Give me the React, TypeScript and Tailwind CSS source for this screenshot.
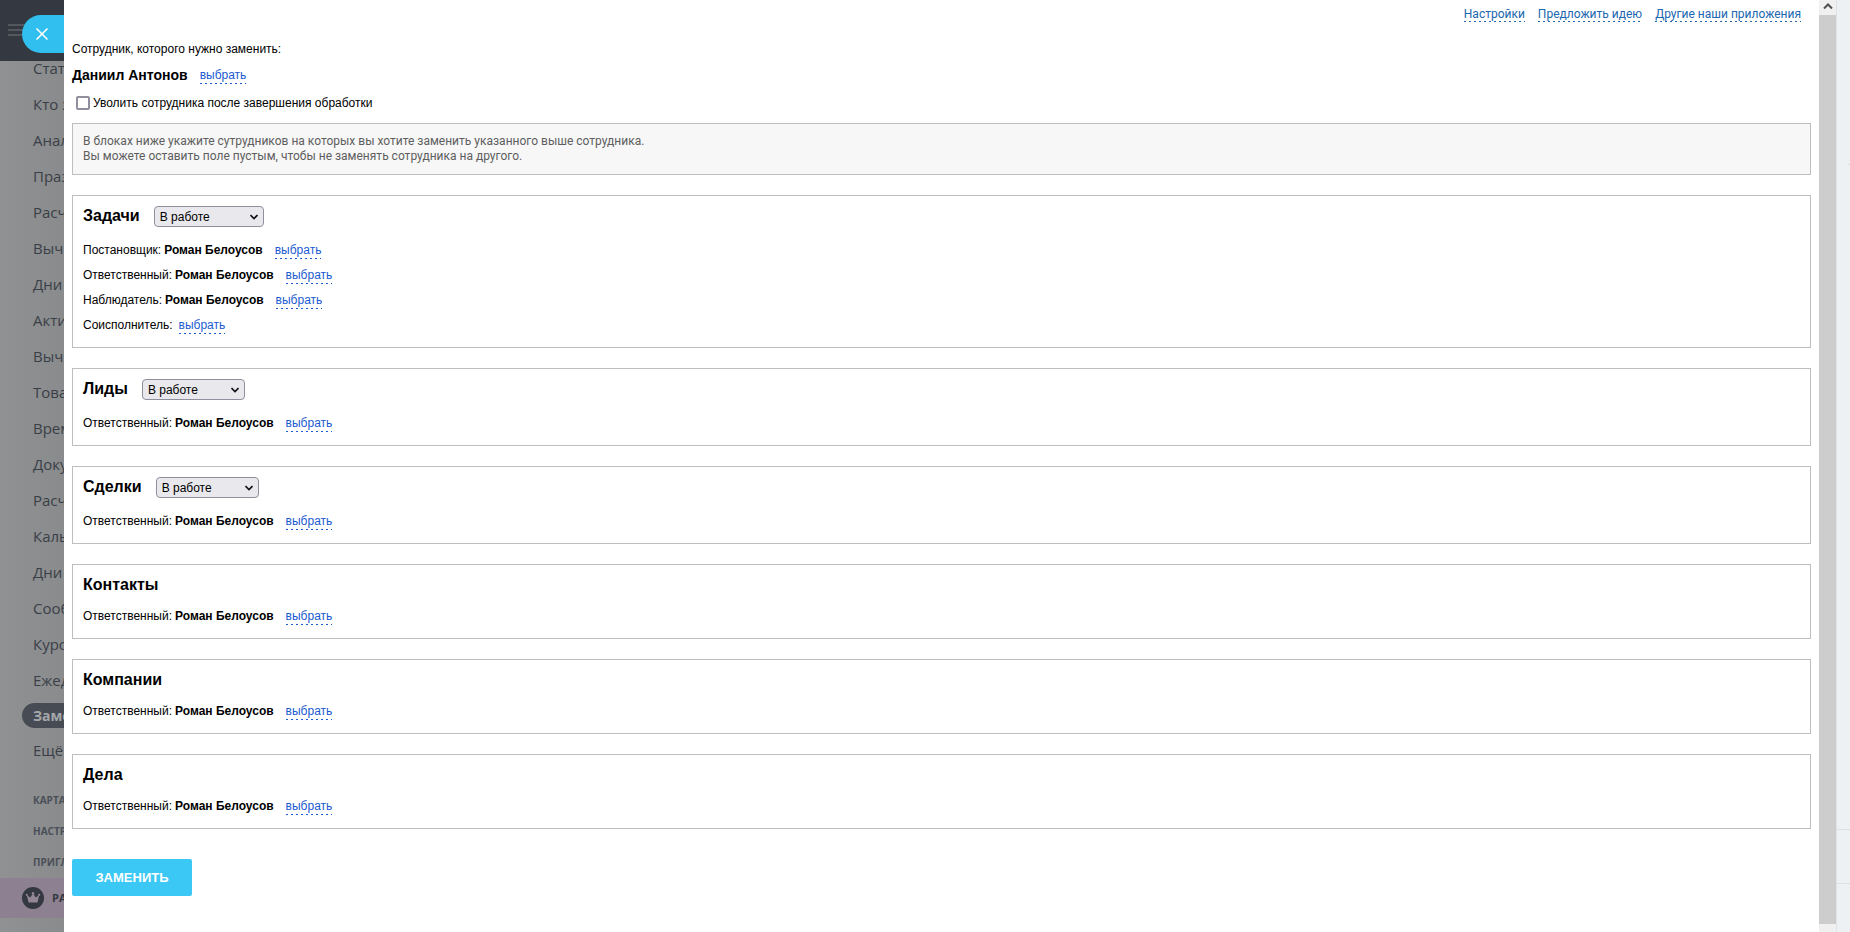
import { useState } from "react";
import { X } from "lucide-react";

interface Person {
  role: string;
  name?: string;
}

interface Block {
  title: string;
  selectWidth?: string;
  people: Person[];
}

const EMPLOYEE = "Роман Белоусов";

const blocks: Block[] = [
  {
    title: "Задачи",
    selectWidth: "w-[110px]",
    people: [
      { role: "Постановщик", name: EMPLOYEE },
      { role: "Ответственный", name: EMPLOYEE },
      { role: "Наблюдатель", name: EMPLOYEE },
      { role: "Соисполнитель" },
    ],
  },
  { title: "Лиды", selectWidth: "w-[103px]", people: [{ role: "Ответственный", name: EMPLOYEE }] },
  { title: "Сделки", selectWidth: "w-[103px]", people: [{ role: "Ответственный", name: EMPLOYEE }] },
  { title: "Контакты", people: [{ role: "Ответственный", name: EMPLOYEE }] },
  { title: "Компании", people: [{ role: "Ответственный", name: EMPLOYEE }] },
  { title: "Дела", people: [{ role: "Ответственный", name: EMPLOYEE }] },
];

const menu = [
  "Стат", "Кто з", "Анал", "Праз", "Расч", "Выч", "Дни", "Акти", "Выч", "Това",
  "Врем", "Доку", "Расч", "Каль", "Дни", "Сооб", "Курс", "Ежед",
];

const footerMenu = ["КАРТА", "НАСТР", "ПРИГЛ"];

const topLinks = ["Настройки", "Предложить идею", "Другие наши приложения"];

function Sidebar() {
  return (
    <aside className="relative flex w-16 shrink-0 flex-col overflow-hidden whitespace-nowrap bg-linear-to-r from-[#8f9193] to-[#898b8d] font-['Open_Sans','Noto_Sans',sans-serif] text-[#3a3f47]">
      <div className="flex h-[61px] shrink-0 items-center bg-[#343841] pb-px pl-2">
        <button type="button" aria-label="Меню" className="flex flex-col gap-[3px]">
          <span className="h-0.5 w-5 bg-[#54575e]" />
          <span className="h-0.5 w-5 bg-[#54575e]" />
          <span className="h-0.5 w-5 bg-[#54575e]" />
        </button>
      </div>
      <button
        type="button"
        aria-label="Закрыть"
        className="absolute top-[15px] left-[22px] flex h-[38px] w-[60px] items-center rounded-l-full bg-[#31bfef] pl-2.5 text-white"
      >
        <X size={20} strokeWidth={2} />
      </button>
      <nav className="-mt-[11px] flex flex-col pl-[33px] text-[15px]">
        {menu.map((item, i) => (
          <a key={i} href="#" className="h-9 leading-9">
            {item}
          </a>
        ))}
        <a
          href="#"
          className="mt-[5px] -ml-[11px] h-[25px] rounded-l-full bg-[#464b54] pl-[11px] text-sm font-bold leading-[25px] text-[#a5a7aa]"
        >
          Замен
        </a>
        <a href="#" className="mt-1 h-9 leading-9">
          Ещё
        </a>
      </nav>
      <nav className="mt-[17px] flex flex-col pl-[33px] text-[10px] font-bold text-[#4a4f57]">
        {footerMenu.map((item) => (
          <a key={item} href="#" className="h-[31px] leading-[31px]">
            {item}
          </a>
        ))}
      </nav>
      <a
        href="#"
        className="flex h-10 shrink-0 items-center gap-2 bg-[#8d8090] pl-[22px] text-[11px] font-bold text-[#343841]"
      >
        <svg viewBox="0 0 22 22" className="size-[22px] shrink-0" aria-hidden="true">
          <circle cx="11" cy="11" r="11" fill="#343841" />
          <g fill="#938696">
            <path d="M4.800 8l3.400 2.600L11 6.500l2.800 4.100L17.200 8l-1.700 7.500h-9z" />
            <circle cx="4.800" cy="7.800" r="1.100" />
            <circle cx="11" cy="6.300" r="1.200" />
            <circle cx="17.200" cy="7.800" r="1.100" />
          </g>
        </svg>
        РА
      </a>
    </aside>
  );
}

function ChooseButton({ label, className = "" }: { label: string; className?: string }) {
  return (
    <button
      type="button"
      aria-label={`выбрать: ${label}`}
      className={`cursor-pointer bg-[linear-gradient(90deg,#1b5ad1_2px,transparent_2px)] bg-[length:5px_1px] bg-bottom-left bg-repeat-x leading-[18px] text-[#1b5ad1] ${className}`}
    >
      выбрать
    </button>
  );
}

function ReplaceBlock({ block }: { block: Block }) {
  const [status, setStatus] = useState("work");

  return (
    <section className="mb-5 border border-[#bebebe] p-2.5">
      <div className={`flex items-start gap-3.5 ${block.selectWidth ? "pb-2.5" : "pb-2"}`}>
        <h2 className="text-base leading-5 font-bold">{block.title}</h2>
        {block.selectWidth && (
          <span className={`relative ${block.selectWidth}`}>
            <select
              aria-label={`Статус: ${block.title}`}
              value={status}
              onChange={(e) => setStatus(e.target.value)}
              className="block h-[21px] w-full appearance-none rounded border border-[#8f8f9d] bg-[#e9e9ed] pl-[5px] text-xs"
            >
              <option value="work">В работе</option>
              <option value="all">Все</option>
            </select>
            <svg
              viewBox="0 0 8 6"
              className="pointer-events-none absolute top-2 right-1.5 h-1.5 w-2"
              fill="none"
              stroke="#111"
              strokeWidth="1.6"
              aria-hidden="true"
            >
              <path d="M.5 1L4 4.500 7.500 1" />
            </svg>
          </span>
        )}
      </div>
      <ul>
        {block.people.map((person) => (
          <li key={person.role} className="flex h-[25px] items-center">
            <span>{person.role}:</span>
            {person.name && <b className="ml-[3px]">{person.name}</b>}
            <ChooseButton label={person.role} className={person.name ? "ml-3" : "ml-1.5"} />
          </li>
        ))}
      </ul>
    </section>
  );
}

export default function App() {
  const [dismiss, setDismiss] = useState(false);

  return (
    <div className="flex h-screen overflow-hidden bg-white font-['Liberation_Sans',Arial,sans-serif] text-xs text-black">
      <Sidebar />
      <main className="min-w-0 flex-1 overflow-hidden px-2">
        <header className="flex justify-end gap-[13px] pt-1.5 pr-2.5 font-[Roboto,sans-serif] leading-4">
          {topLinks.map((link) => (
            <a
              key={link}
              href="#"
              className="bg-[linear-gradient(90deg,#2067b0_2px,transparent_2px)] bg-[length:5px_1px] bg-bottom-left bg-repeat-x text-[#2067b0]"
            >
              {link}
            </a>
          ))}
        </header>

        <p className="mt-[19px] leading-4">Сотрудник, которого нужно заменить:</p>
        <div className="mt-2 flex items-center gap-3">
          <b className="text-sm leading-5">Даниил Антонов</b>
          <ChooseButton label="Сотрудник" />
        </div>
        <label className="mt-2.5 flex items-center gap-[3px] pl-1 leading-4">
          <input
            type="checkbox"
            checked={dismiss}
            onChange={(e) => setDismiss(e.target.checked)}
            className="size-3.5 appearance-none rounded-xs border-2 border-[#8f8f9d] bg-white checked:bg-[#1b5ad1]"
          />
          Уволить сотрудника после завершения обработки
        </label>

        <div className="mt-3 mb-5 border border-[#bebebe] bg-[#f7f7f7] p-2.5 font-[Roboto,sans-serif] leading-[15px] text-[#5e5e5e]">
          <p>В блоках ниже укажите сутрудников на которых вы хотите заменить указанного выше сотрудника.</p>
          <p>Вы можете оставить поле пустым, чтобы не заменять сотрудника на другого.</p>
        </div>

        {blocks.map((block) => (
          <ReplaceBlock key={block.title} block={block} />
        ))}

        <button
          type="button"
          className="mt-2.5 h-[37px] w-[120px] cursor-pointer rounded-xs bg-[#3bc8f5] text-[13px] font-bold text-white"
        >
          ЗАМЕНИТЬ
        </button>
      </main>

      <div className="flex w-[17px] shrink-0 flex-col bg-[#f0f0f0]">
        <div className="flex h-[15px] items-center justify-center pb-1">
          <svg viewBox="0 0 10 6" className="h-1.5 w-2.5" fill="none" stroke="#505050" strokeWidth="2" aria-hidden="true">
            <path d="M1 5.500L5 1.500 9 5.500" />
          </svg>
        </div>
        <div className="flex-1 bg-[#cdcdcd]" />
        <div className="h-2" />
      </div>
      <div className="flex w-3.5 shrink-0 flex-col border-l border-[#dce3e7] bg-[#edf1f4]">
        <div className="h-[165px] w-0.5 self-end border-b border-[#dce1e4]" />
        <div className="flex-1" />
        <div className="h-[54px] border-t border-[#dce1e4]" />
        <div className="h-[49px] border-t border-[#dce1e4]" />
      </div>
    </div>
  );
}
